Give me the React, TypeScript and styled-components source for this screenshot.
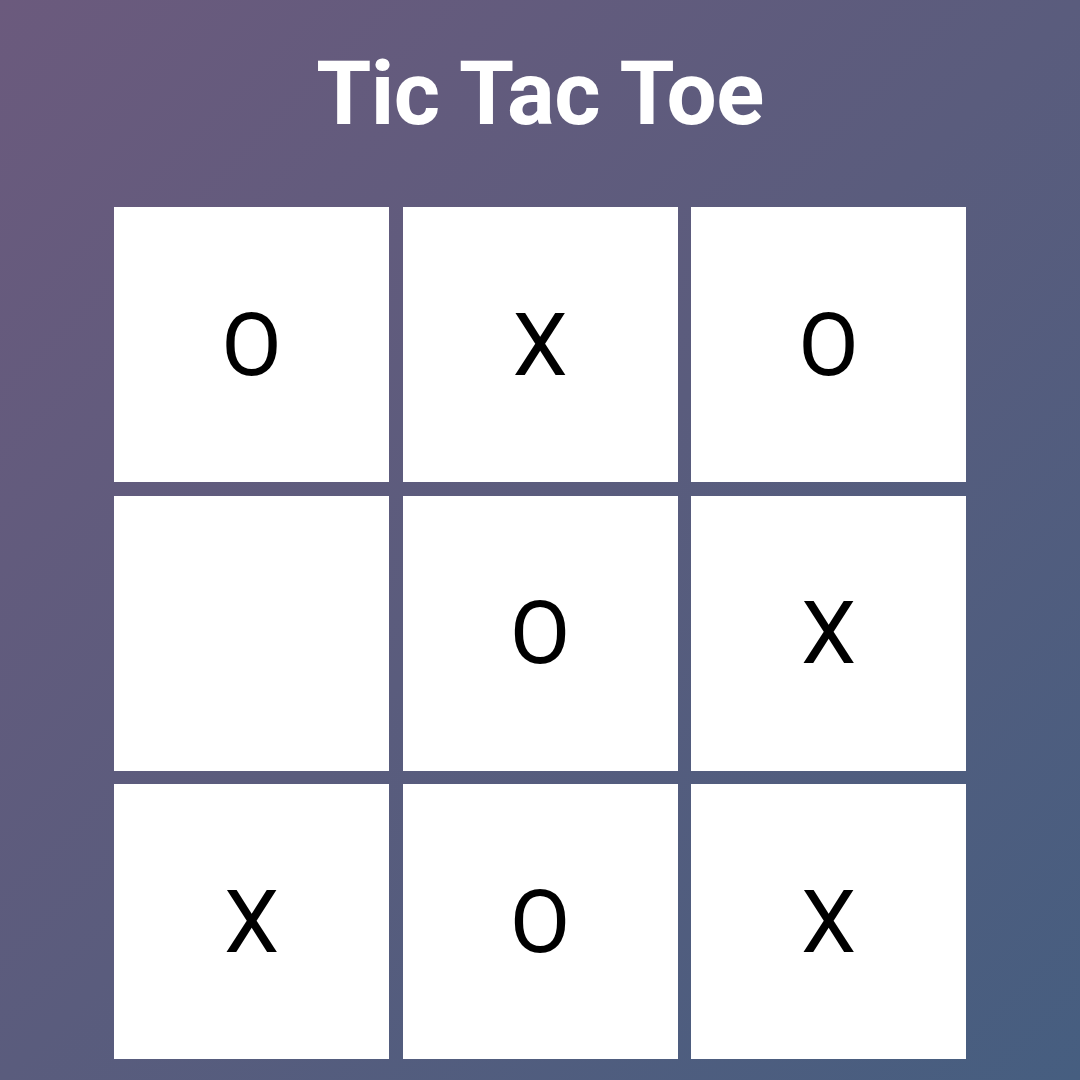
import React from "react";
import styled, { createGlobalStyle } from "styled-components";

const Global = createGlobalStyle`
  html, body { margin: 0; padding: 0; }
  body {
    width: 1080px;
    height: 1080px;
    overflow: hidden;
    font-family: Roboto, "Liberation Sans", sans-serif;
  }
`;

const Page = styled.div`
  width: 1080px;
  height: 1080px;
  box-sizing: border-box;
  background: linear-gradient(135deg, #6b5a7d 0%, #5a5c7d 50%, #465e80 100%);
  display: flex;
  flex-direction: column;
  align-items: center;
  padding-top: 42px;
`;

const Title = styled.h1`
  margin: 0;
  color: #ffffff;
  font-family: Roboto, "Liberation Sans", sans-serif;
  font-weight: 700;
  font-size: 89px;
  line-height: 104px;
  letter-spacing: -0.5px;
`;

const Board = styled.div`
  margin-top: 61px;
  display: grid;
  grid-template-columns: repeat(3, 275px);
  grid-template-rows: repeat(3, 275px);
  gap: 13.5px;
`;

const Cell = styled.div`
  background: #ffffff;
  display: flex;
  align-items: center;
  justify-content: center;
  color: #000000;
  font-family: Roboto, "Liberation Sans", sans-serif;
  font-weight: 400;
  font-size: 88px;
  line-height: 1;
`;

const cells = ["O", "X", "O", "", "O", "X", "X", "O", "X"];

export default function App() {
  return (
    <>
      <Global />
      <Page>
        <Title>Tic Tac Toe</Title>
        <Board>
          {cells.map((c, i) => (
            <Cell key={i}>{c}</Cell>
          ))}
        </Board>
      </Page>
    </>
  );
}
